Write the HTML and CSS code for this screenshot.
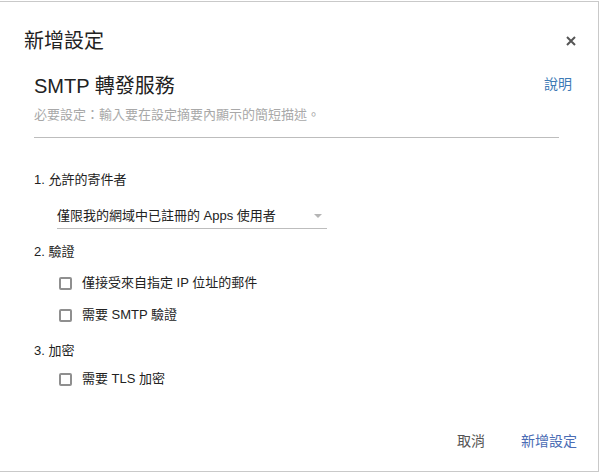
FILE: index.html
```html
<!DOCTYPE html>
<html lang="zh-Hant">
<head>
<meta charset="utf-8">
<title>新增設定</title>
<link rel="stylesheet" href="styles.css">
</head>
<body>
<div class="dialog">
  <div class="dlg-header">
    <h1 class="dlg-title">新增設定</h1>
    <button class="close" aria-label="關閉">
      <svg width="10" height="10" viewBox="0 0 10 10"><path d="M1 1L9 9M9 1L1 9" stroke="#555" stroke-width="2" fill="none"/></svg>
    </button>
  </div>
  <div class="dlg-body">
    <div class="name-row">
      <h2 class="setting-name">SMTP 轉發服務</h2>
      <a class="help" href="#">說明</a>
    </div>
    <div class="desc">必要設定：輸入要在設定摘要內顯示的簡短描述。</div>

    <div class="sec sec1">1. 允許的寄件者</div>
    <div class="select">
      <span class="select-text">僅限我的網域中已註冊的 Apps 使用者</span>
      <span class="arrow"></span>
    </div>

    <div class="sec sec2">2. 驗證</div>
    <label class="cb cb1"><span class="box"></span>僅接受來自指定 IP 位址的郵件</label>
    <label class="cb cb2"><span class="box"></span>需要 SMTP 驗證</label>

    <div class="sec sec3">3. 加密</div>
    <label class="cb cb3"><span class="box"></span>需要 TLS 加密</label>
  </div>
  <div class="dlg-footer">
    <button class="btn cancel">取消</button>
    <button class="btn primary">新增設定</button>
  </div>
</div>
</body>
</html>
```
FILE: styles.css
```css
html, body {
  margin: 0;
  padding: 0;
  background: #fff;
}
body {
  font-family: "Liberation Sans", "Noto Sans CJK TC", sans-serif;
  color: #222;
  font-size: 13px;
  overflow: hidden;
}
.dialog {
  margin: 1px 0 0 -1px;
  width: 600px;
  height: 471px;
  box-sizing: border-box;
  border: 1px solid #c9c9c9;
  display: flex;
  flex-direction: column;
  position: relative;
}
.dlg-header {
  display: flex;
  justify-content: space-between;
  align-items: center;
  padding: 27px 22px 0 24px;
}
.dlg-title {
  margin: 0;
  font-size: 20px;
  font-weight: normal;
  line-height: 24px;
  color: #222;
}
.close {
  border: 0;
  background: none;
  padding: 0;
  width: 10px;
  height: 10px;
  display: flex;
  margin-top: -1px;
}
.dlg-body {
  padding: 0 26px 0 34px;
  flex: 1;
  display: flex;
  flex-direction: column;
  align-items: flex-start;
}
.name-row {
  align-self: stretch;
  display: flex;
  justify-content: space-between;
  align-items: center;
  margin-top: 21px;
}
.setting-name {
  margin: 0;
  font-size: 20px;
  font-weight: normal;
  line-height: 24px;
  color: #222;
}
.help {
  color: #3d7ab5;
  text-decoration: none;
  font-size: 14px;
  line-height: 16px;
  margin-top: -5px;
}
.desc {
  align-self: stretch;
  margin-right: 13px;
  margin-top: 9px;
  color: #a8a8a8;
  font-size: 13px;
  line-height: 16px;
  padding-bottom: 14px;
  border-bottom: 1px solid #bdbdbd;
}
.sec {
  line-height: 16px;
  color: #222;
}
.sec1 { margin-top: 34px; }
.select {
  margin-top: 20px;
  margin-left: 23px;
  width: 270px;
  box-sizing: border-box;
  display: flex;
  justify-content: space-between;
  align-items: center;
  padding: 0 5px 4px 0;
  border-bottom: 1px solid #bdbdbd;
  line-height: 16px;
}
.select-text { color: #222; }
.arrow {
  width: 0;
  height: 0;
  border-left: 4px solid transparent;
  border-right: 4px solid transparent;
  border-top: 4px solid #b5b5b5;
}
.sec2 { margin-top: 15px; }
.sec3 { margin-top: 20px; }
.cb {
  display: flex;
  align-items: center;
  line-height: 16px;
  margin-left: 25px;
  color: #222;
}
.box {
  width: 13px;
  height: 13px;
  box-sizing: border-box;
  border: 2px solid #8f8f8f;
  border-radius: 2px;
  margin-right: 10px;
}
.cb1 { margin-top: 15px; }
.cb2 { margin-top: 16px; }
.cb3 { margin-top: 12px; }
.dlg-footer {
  display: flex;
  justify-content: flex-end;
  align-items: center;
  gap: 36px;
  padding: 0 21px 22px 0;
}
.btn {
  border: 0;
  background: none;
  padding: 0;
  font-family: "Liberation Sans", "Noto Sans CJK TC", sans-serif;
  font-size: 14px;
  line-height: 16px;
}
.cancel { color: #555; }
.primary { color: #4a6cb4; }
```
